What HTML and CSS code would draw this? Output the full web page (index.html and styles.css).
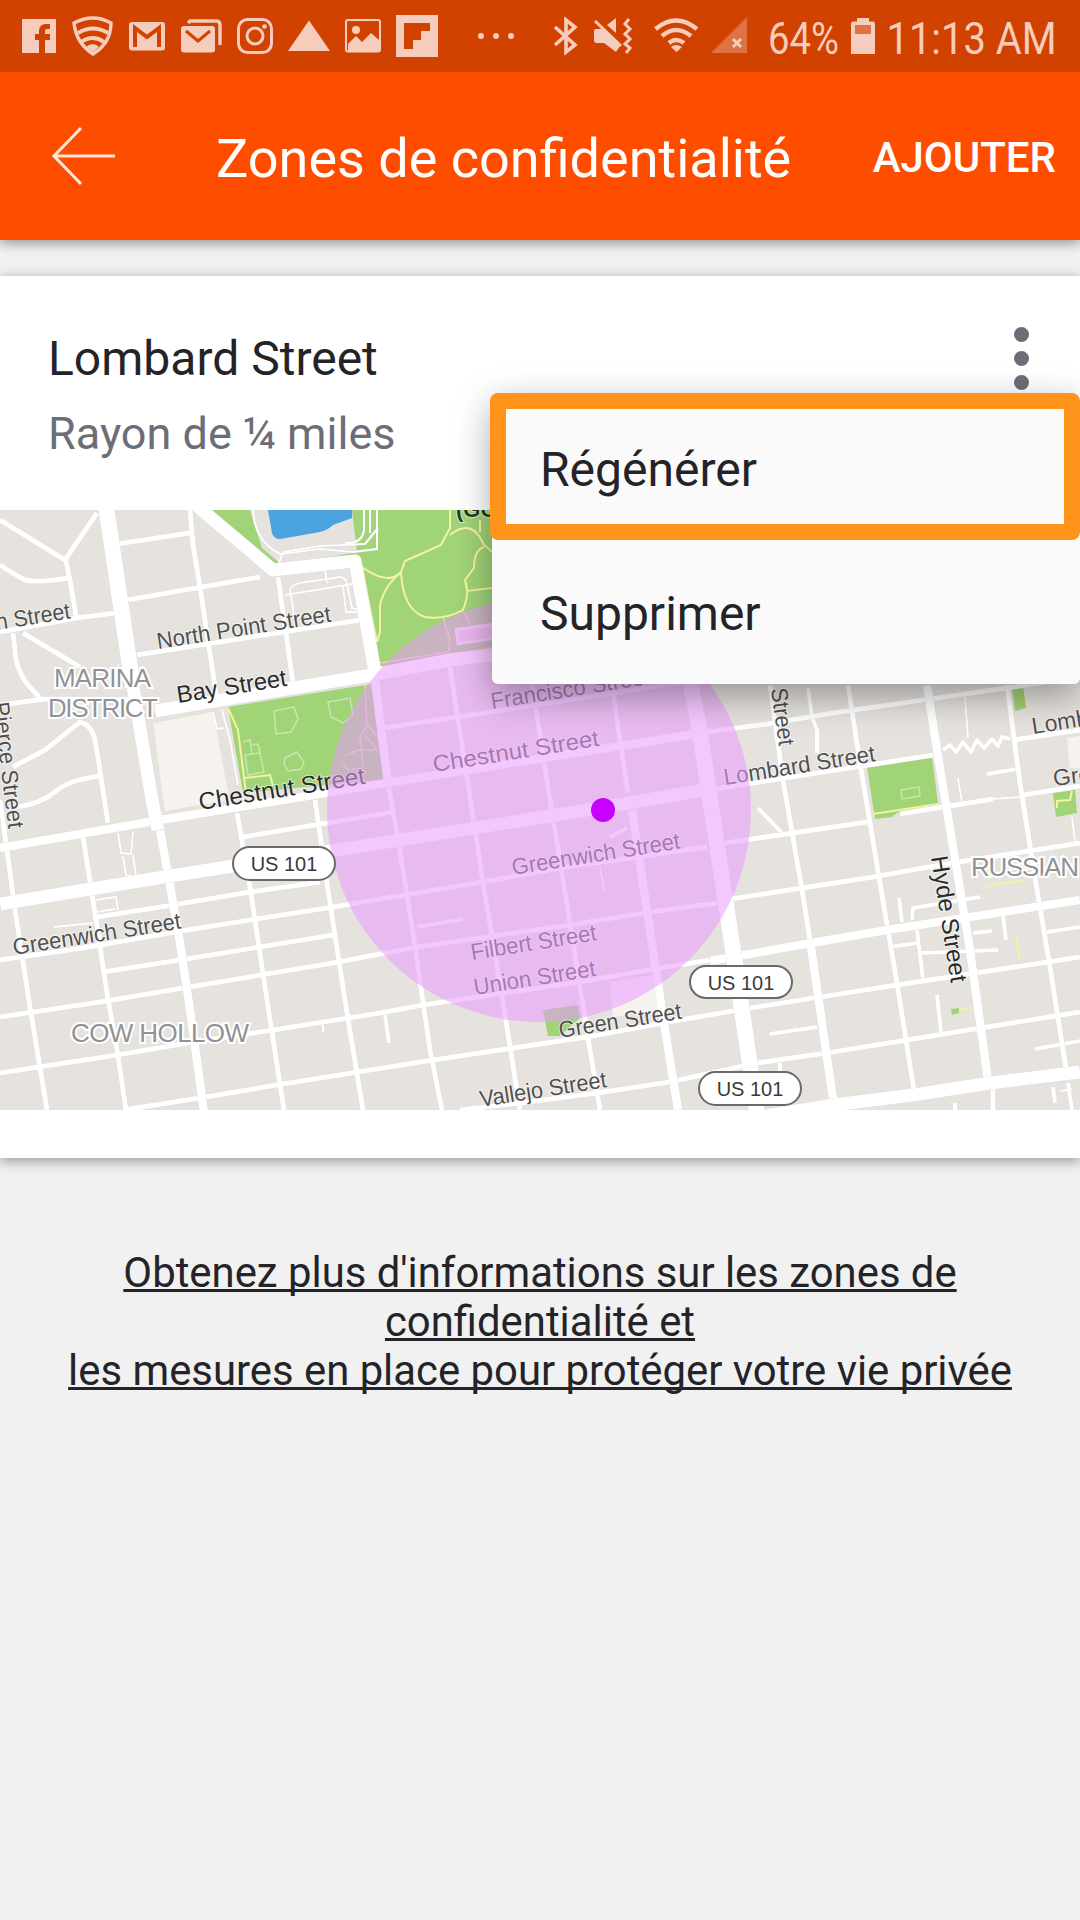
FILE: index.html
```html
<!DOCTYPE html>
<html lang="fr">
<head>
<meta charset="utf-8">
<title>Zones de confidentialité</title>
<link rel="stylesheet" href="styles.css">
</head>
<body>
<div class="status">
  <svg width="35" height="72" viewBox="22 0 35 72"><path fill-rule="evenodd" d="M22 19H56V53H45V40H50V34H45V31Q45 29 47 29H50V24H45Q39 25 39 31V34H35V40H39V53H22Z"/></svg>
  <svg width="42" height="72" viewBox="72 0 42 72"><path class="line" stroke-width="3.4" d="M74 23Q93 13 111 23Q111 43 93 54Q76 43 74 23Z"/><path class="line" stroke-width="4" d="M78 33Q93 24 108 33M81 42Q93 34 104 42"/><path d="M86 47Q93 41 99 47L93 52Z"/></svg>
  <svg width="37" height="72" viewBox="129 0 37 72"><rect x="129" y="22" width="36" height="28.500" rx="3"/><path class="cut" stroke-width="4" d="M135 47V28L147 37L159 28V47"/></svg>
  <svg width="41" height="72" viewBox="181 0 41 72"><rect x="181" y="26" width="34" height="26.500" rx="3"/><path class="cut" stroke-width="3" d="M186 31L198 41L210 31"/><path class="line" stroke-width="3.400" d="M188 23L190 21H216Q220 21 220 25V45"/></svg>
  <svg width="36" height="72" viewBox="237 0 36 72"><rect class="line" x="238.500" y="19.500" width="33" height="33" rx="9" stroke-width="3"/><circle class="line" cx="255" cy="36" r="8" stroke-width="3"/><circle cx="264.500" cy="26.500" r="2.300"/></svg>
  <svg width="42" height="72" viewBox="288 0 42 72"><path d="M309 20.500L330 51H288Z"/></svg>
  <svg width="36" height="72" viewBox="345 0 36 72"><rect class="line" x="346" y="20" width="34" height="31.500" rx="2" stroke-width="2"/><circle cx="356" cy="30" r="4"/><path d="M348 44L356 36L362 42L371 33L379 40V51H348Z"/></svg>
  <svg width="42" height="72" viewBox="396 0 42 72"><path fill-rule="evenodd" d="M396 15H438V57H396ZM404 23V49H413V40H421V31H430V23Z"/></svg>
  <svg width="62" height="72" viewBox="453 0 62 72"><circle cx="481" cy="36" r="3"/><circle cx="496" cy="36" r="3"/><circle cx="511" cy="36" r="3"/></svg>
  <svg width="49" height="72" viewBox="530 0 49 72"><path class="line" stroke-width="3.600" d="M555 27L575 45L566 52V20L575 27L555 45"/></svg>
  <svg width="45" height="72" viewBox="594 0 45 72"><path d="M594 31Q594 29 596 29H603L620 46L616 52L604 43H597Q594 43 594 40ZM607 25L616 18V33Z"/><path class="line" stroke-width="3" d="M595 21L621 46"/><path class="line" stroke-width="3" d="M629 19L625 24L630 29L625 34L630 39L625 44L630 48L626 53"/></svg>
  <svg width="45" height="72" viewBox="654 0 45 72"><path class="line" stroke-width="4.500" d="M655.500 29Q676 12 697 29M662 36Q676 24 691 36M669 43Q676 37 684 43"/><path d="M671 47Q676 43 682 47L676.500 52Z"/></svg>
  <svg class="signal" width="36" height="72" viewBox="711 0 36 72"><path opacity=".35" d="M747 17V53H711Z"/><path class="line" stroke-width="3" d="M733 39L741 47M741 39L733 47"/></svg>
  <svg width="74" height="72" viewBox="762 0 74 72"><text x="768" y="53.500" textLength="71" lengthAdjust="spacingAndGlyphs">64%</text></svg>
  <svg width="24" height="72" viewBox="851 0 24 72"><path fill-rule="evenodd" d="M857 18H869V21.500H873Q875 21.500 875 24V54H851V24Q851 21.500 853 21.500H857ZM855 25V34H871V25Z"/><path opacity=".35" d="M855 25H871V34H855Z"/></svg>
  <svg width="170" height="72" viewBox="890 0 170 72"><text x="886.500" y="53.500" textLength="170" lengthAdjust="spacingAndGlyphs">11:13 AM</text></svg>
</div>
<header class="appbar">
  <svg class="back" width="66" height="60" viewBox="0 0 66 60"><path d="M65 30H4M31 2L4 30L31 58"/></svg>
  <h1>Zones de confidentialité</h1>
  <span class="add">AJOUTER</span>
</header>
<main>
  <section class="card">
    <div class="head">
      <div>
        <div class="name">Lombard Street</div>
        <div class="radius">Rayon de ¼ miles</div>
      </div>
      <svg class="more" width="15" height="65" viewBox="0 0 15 65"><circle cx="7.500" cy="8.500" r="7.500"/><circle cx="7.500" cy="32.500" r="7.500"/><circle cx="7.500" cy="56.500" r="7.500"/></svg>
    </div>
    <svg class="map" width="1080" height="600" viewBox="0 510 1080 600">
      <rect class="land" y="510" width="1080" height="600"/>
      <!-- parks, water and plots -->
      <path class="park" d="M198 510H500V656L376 668L357 562L274 572ZM228 707L372 684L388 779L243 793ZM867 767L932 757L938 803L897 813L892 817L875 819ZM1012 687L1023 686L1026 708L1015 711ZM1053 793L1075 790L1077 813L1056 817ZM543 1010L578 1005L580 1018L560 1036H548ZM951 1009L959 1008V1013L952 1015Z"/>
      <path class="land" d="M250 510H352L357 552L283 566L262 548Z"/>
      <path class="plot" d="M153 723L213 712L227 787L230 800L165 811ZM610 982L653 975L658 1010L613 1017ZM1067 738L1080 736V768H1070Z"/>
      <path class="water" d="M268 510L272 533Q274 539 280 539L320 532Q328 530 333 525L352 518V510Z"/>
      <g class="outline">
        <path d="M274 711L294 707L298 719L291 732L276 734ZM328 702L350 698L353 716L343 723L331 717ZM285 758L297 752L304 762L301 769L288 771L284 764ZM245 755L260 753L264 772L248 775ZM243 742L250 740L252 753M252 745L258 744L260 753M345 756L358 750L378 750M343 764L348 770L360 768M901 790L919 787L920 796L902 799Z"/>
      </g>
      <g class="trail">
        <path d="M228 708L238 730L246 793M245 778L270 775L273 786M450 510V528L441 545L405 561L401 572Q388 586 362 567M402 572Q385 584 380 605V632L377 642M450 535Q472 517 484 545L497 556M484 547Q474 550 474 568L465 580L467 591L492 588M401 572Q403 610 425 617Q445 620 463 610Q470 593 465 580M362 567Q372 620 377 642M480 532V520M873 814L938 804M1057 808V801L1070 800L1072 791M987 886L1025 880M1016 938L1020 960M960 1010L972 1007"/>
      </g>
      <g class="pinktrail"><path d="M443 618L450 640L448 652L380 663M463 612Q470 618 469 625M445 655L493 648M365 685L367 725L360 738L363 766M367 725L376 735L384 738M365 735L377 750"/></g>
      <rect class="court" x="457" y="627" width="36" height="14" transform="rotate(-8 475 634)"/>
      <!-- service ways and short blocks -->
      <g class="road r2">
        <path d="M213 712L217 729L224 728M222 710L230 740L238 785M276 572L283 552L320 546L365 544L378 528M285 595L358 583M294 615L290 590Q292 584 300 583L340 577Q347 578 347 585L352 608L360 610M325 570L327 583M343 586L346 612H358M118 833L121 853L131 854L133 832M123 856L126 875L136 876L133 855M95 900L116 897L118 910M54 927L93 923M97 912L115 909M323 1024V1032M965 697L968 738M958 778L962 803M993 799L1020 797M1072 817L1075 842M1060 1091L1072 1089M600 867L604 890"/>
        <path d="M253 510Q254 540 280 554L320 549L353 552L377 549V510M364 510V530Q362 544 345 543M370 510V533"/>
      </g>
      <g class="road r4">
        <path d="M385 1015L389 1043M610 837L627 828M808 688L812 717L817 730V753M833 713L805 718M758 808L782 833M987 774L1017 769M899 898L902 922M912 920L913 908L980 897M917 930L923 980M890 947L917 943M922 953L998 950M973 933L992 931M1003 915L1006 940M1047 932L1080 927M937 995L941 1032M770 1034L817 1027M1035 1049L1080 1041M1053 1087L1055 1103M1068 1083L1072 1110M417 927L463 919M780 1063V1073M955 1103V1110"/>
        <path d="M943 750L950 745L956 752L963 742L971 752L977 740L984 748L992 739L998 746L1002 737L1010 739"/>
      </g>
      <!-- ordinary streets -->
      <g class="road r5">
        <path d="M0 520L65 560L97 513M0 565Q17 576 25 580Q40 583 68 578M65 557L70 580L76 616M0 632L77 618L115 613M13 633L16 660Q20 675 28 685L40 698M23 633L80 667M0 705L45 699L140 700M117 544L190 533M127 600L260 577M137 655L360 620M190 510L193 545L200 587L217 700M278 577L293 683M13 767L45 750L80 722Q93 725 96 745L108 823M17 807Q40 804 55 792Q68 780 100 776M0 800L7 850L15 910L30 1007L47 1110M83 837L93 900L107 993L117 1050L126 1110M237 813L250 887L267 1000L284 1110M315 800L328 890L347 1013L363 1110"/>
        <path d="M243 837L327 823L393 812M97 917L167 906L250 892L320 882M0 960L83 948L187 930L333 907L483 882L560 868L707 847M103 972L180 960L333 935M0 1017L100 1002L183 988L333 963L417 947L570 925L643 913L717 903M0 1073L117 1055L200 1041L273 1030L380 1013L423 1005L580 982L660 968L710 960M123 1110L200 1098L283 1084L433 1060L587 1037L663 1023L750 1008L897 985L1080 957M460 1110L520 1103L597 1093L670 1082L757 1063L833 1052L987 1027L1080 1012"/>
        <path d="M388 783L397 833L413 933L430 1050L442 1110M450 667L467 777L483 883L500 983L520 1110M530 670L550 800L570 923L590 1050L600 1110M607 660L613 693L628 793M383 728L537 705L690 681M707 732L767 724L833 713L923 700L1013 687L1080 677M715 789L933 755M1013 740L1080 730M725 843L867 822M900 814L993 799M1023 795L1080 786M725 900L873 877L940 865L1080 843M770 685L783 780L802 890L810 940M848 685L860 763L880 883L897 983L915 1097M1007 685L1020 783L1037 890L1050 967L1067 1075M993 1085V1110"/>
      </g>
      <!-- main roads -->
      <g class="road r8">
        <path d="M0 848L160 820L387 783L543 758L627 745L707 732M375 680L388 783M632 810L647 910L663 1017L678 1110M810 940L834 1106M927 685L937 750L970 950L988 1080M710 961L817 942L887 930L1080 900"/>
        <path d="M160 830L169 880L180 943L190 1010L204 1112"/>
      </g>
      <g class="road r13">
        <path d="M0 904L170 876L233 866L350 848L600 808L715 788M155 711L377 674L450 660L493 655M197 506L273 570L355 561L375 672M760 1117L833 1105L913 1095L990 1083L1080 1072M133 687L152 800L158 830"/>
      </g>
      <g class="road r17"><path d="M106 506L133 687M690 680L700 733L733 950L757 1112"/></g>
      <!-- street names -->
      <g class="label">
        <text transform="translate(-3 630) rotate(-9)" textLength="75" lengthAdjust="spacingAndGlyphs">n Street</text>
        <text transform="translate(158 649) rotate(-9)" textLength="176" lengthAdjust="spacingAndGlyphs">North Point Street</text>
        <text class="dark" transform="translate(178 703) rotate(-9)" textLength="111" lengthAdjust="spacingAndGlyphs">Bay Street</text>
        <text class="dark" transform="translate(200 810) rotate(-9)" textLength="168" lengthAdjust="spacingAndGlyphs">Chestnut Street</text>
        <text transform="translate(-7 703) rotate(83)" textLength="127" lengthAdjust="spacingAndGlyphs">Pierce Street</text>
        <text transform="translate(492 709) rotate(-9)" textLength="161" lengthAdjust="spacingAndGlyphs">Francisco Street</text>
        <text transform="translate(434 772) rotate(-9)" textLength="168" lengthAdjust="spacingAndGlyphs">Chestnut Street</text>
        <text transform="translate(14 955) rotate(-9)" textLength="170" lengthAdjust="spacingAndGlyphs">Greenwich Street</text>
        <text transform="translate(513 875) rotate(-9)" textLength="170" lengthAdjust="spacingAndGlyphs">Greenwich Street</text>
        <text transform="translate(472 960) rotate(-9)" textLength="127" lengthAdjust="spacingAndGlyphs">Filbert Street</text>
        <text transform="translate(475 995) rotate(-9)" textLength="123" lengthAdjust="spacingAndGlyphs">Union Street</text>
        <text transform="translate(560 1038) rotate(-9)" textLength="124" lengthAdjust="spacingAndGlyphs">Green Street</text>
        <text transform="translate(481 1107) rotate(-9)" textLength="128" lengthAdjust="spacingAndGlyphs">Vallejo Street</text>
        <text transform="translate(771 689) rotate(82)" textLength="58" lengthAdjust="spacingAndGlyphs">Street</text>
        <text transform="translate(725 785) rotate(-9)" textLength="153" lengthAdjust="spacingAndGlyphs">Lombard Street</text>
        <text transform="translate(1033 734) rotate(-9)">Lomb</text>
        <text transform="translate(1054 786) rotate(-7)">Gre</text>
        <text class="dark" transform="translate(931 857) rotate(81)" textLength="128" lengthAdjust="spacingAndGlyphs">Hyde Street</text>
        <text class="center" x="456" y="517">(GGNRA)</text>
      </g>
      <g class="area">
        <text x="54" y="687" textLength="97">MARINA</text>
        <text x="48" y="717" textLength="110">DISTRICT</text>
        <text x="71" y="1042" textLength="178">COW HOLLOW</text>
        <text x="971" y="876" textLength="108">RUSSIAN</text>
      </g>
      <circle class="zone" cx="539" cy="810" r="212"/>
      <circle class="pin" cx="603" cy="810" r="12"/>
      <g class="shield">
        <rect x="233" y="847" width="102" height="33" rx="16.500"/><text x="284" y="871">US 101</text>
        <rect x="690" y="966" width="102" height="32" rx="16"/><text x="741" y="990">US 101</text>
        <rect x="699" y="1072" width="102" height="33" rx="16.500"/><text x="750" y="1096">US 101</text>
      </g>
    </svg>
    <div class="menu">
      <div class="item selected">Régénérer</div>
      <div class="item">Supprimer</div>
    </div>
  </section>
  <a class="info">Obtenez plus d'informations sur les zones de confidentialité et<br>les mesures en place pour protéger votre vie privée</a>
</main>
</body>
</html>
```
FILE: styles.css
```css
* { box-sizing: border-box; }
body {
  margin: 0;
  width: 1080px;
  height: 1920px;
  overflow: hidden;
  background: #f1f1f1;
  color: #242428;
  font-family: Roboto, sans-serif;
}
svg { display: block; flex: none; }

.status {
  position: relative;
  z-index: 1;
  display: flex;
  gap: 15px;
  height: 72px;
  padding-left: 22px;
  background: #d14100;
  fill: #f6cdbd;
}
.status svg { overflow: visible; }
.status text { font-size: 45px; }
.status .line { fill: none; stroke: #f6cdbd; }
.status .cut { fill: none; stroke: #d14100; }
.status .signal { margin-left: -3px; }

.appbar {
  position: relative;
  display: flex;
  align-items: center;
  height: 168px;
  padding: 0 24px 0 50px;
  background: #ff4d00;
  color: #fff;
  box-shadow: 0 3px 12px rgba(0, 0, 0, .4);
}
.back path { fill: none; stroke: #ffe6d8; stroke-width: 3; }
h1 {
  margin: 4px 0 0 100px;
  font-size: 54px;
  font-weight: 400;
  white-space: nowrap;
}
.add { margin-left: auto; margin-top: 2px; font-size: 42px; font-weight: 500; }

main { padding-top: 36px; }
.card {
  position: relative;
  height: 882px;
  background: #fff;
  box-shadow: 0 3px 12px rgba(0, 0, 0, .38);
}
.head {
  display: flex;
  justify-content: space-between;
  height: 234px;
  padding: 50px 51px 0 48px;
}
.name { padding-top: 1px; font-size: 48px; line-height: 64px; }
.radius { margin-top: 13px; font-size: 45px; line-height: 60px; color: #6d6d78; }
.more { fill: #6d6d78; }

.menu {
  position: absolute;
  top: 117px;
  right: 0;
  width: 588px;
  height: 291px;
  border-radius: 6px;
  background: #fafafa;
  box-shadow: 0 12px 36px rgba(0, 0, 0, .36);
}
.item {
  display: flex;
  align-items: center;
  height: 146px;
  padding-left: 48px;
  font-size: 48px;
}
.selected {
  height: 147px;
  margin-left: -2px;
  padding: 6px 0 0 34px;
  border: 16px solid #ff941a;
  border-radius: 8px;
}

.land { fill: #e6e2de; }
.park { fill: #a1d377; }
.water { fill: #4ba3df; }
.plot { fill: #f6f3ef; }
.outline { fill: none; stroke: #c9e6ae; stroke-width: 1.5; }
.trail { fill: none; stroke: #f5f2a0; stroke-width: 2; }
.pinktrail { fill: none; stroke: #f2d0c0; stroke-width: 1.3; }
.court { fill: #e8d5d5; stroke: #f5edf0; stroke-width: 3; }
.road {
  fill: none;
  stroke: #fff;
  stroke-linejoin: round;
  filter: drop-shadow(0 0 .7px #c9c0ca);
}
.r2 { stroke-width: 2; }
.r4 { stroke-width: 4; }
.r5 { stroke-width: 5; }
.r8 { stroke-width: 8.5; }
.r13 { stroke-width: 13; }
.r17 { stroke-width: 16; }
.map text {
  font-family: "Liberation Sans", sans-serif;
  paint-order: stroke;
  stroke: rgba(255, 255, 255, .6);
  stroke-width: 2px;
}
.label { font-size: 23px; fill: #505050; }
.label .dark { font-size: 24px; fill: #2b2b2b; }
.label .center { font-size: 22px; font-weight: 700; fill: #1f4012; }
.map .area text { font-size: 26px; fill: #929296; stroke: #fff; stroke-width: 4px; }
.zone { fill: #e99bff; fill-opacity: .55; }
.pin { fill: #c800ff; }
.shield rect { fill: #fff; stroke: #6a6a6a; stroke-width: 2; }
.shield text { font-size: 20px; fill: #3a3a3a; stroke: none; text-anchor: middle; }

.info {
  display: block;
  padding: 90px 60px 0;
  font-size: 41.85px;
  line-height: 49px;
  text-align: center;
  text-decoration: underline;
  text-decoration-thickness: 3px;
  text-decoration-skip-ink: none;
}
```
